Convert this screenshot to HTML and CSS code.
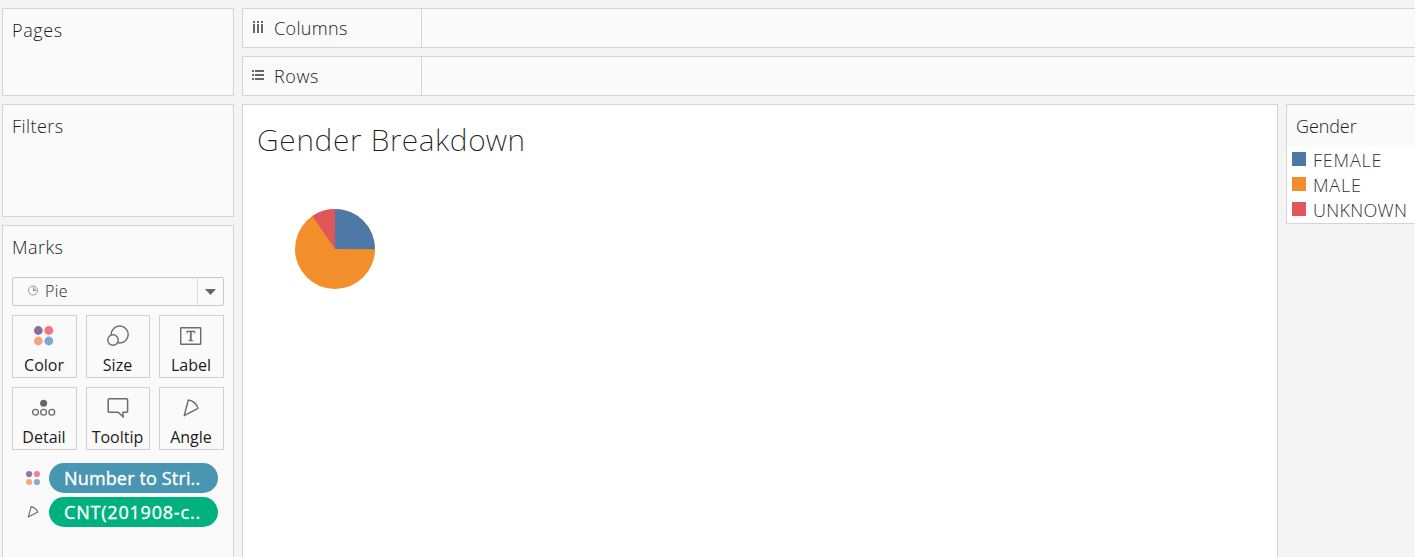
FILE: index.html
```html
<!DOCTYPE html>
<html lang="en">
<head>
<meta charset="utf-8">
<title>Gender Breakdown</title>
<link rel="stylesheet" href="styles.css">
</head>
<body>
<div class="app">
  <aside class="sidebar">
    <section class="card pages"><h2><span class="t-pages">Pages</span></h2></section>
    <section class="card filters"><h2><span class="t-filters">Filters</span></h2></section>
    <section class="card marks">
      <h2><span class="t-marks">Marks</span></h2>
      <div class="select">
        <div class="select-value">
          <svg width="12" height="12" viewBox="0 0 12 12" fill="none" stroke="#999"><circle cx="6" cy="5.5" r="4.5"/><path d="M6.5 2V5.5H9.5M6 6L8.5 3.3"/></svg>
          <span class="t-pie">Pie</span>
        </div>
        <div class="select-arrow"><svg width="11" height="6" viewBox="0 0 11 6"><path d="M0 0H11L5.5 6Z" fill="#666"/></svg></div>
      </div>
      <div class="buttons">
        <div class="btn">
          <svg width="24" height="24" viewBox="0 0 24 24"><circle cx="6.3" cy="6.5" r="4.4" fill="#86709a"/><circle cx="16.8" cy="6.5" r="4.4" fill="#f9707f"/><circle cx="6.3" cy="17" r="4.4" fill="#f5a57c"/><circle cx="16.8" cy="17" r="4.4" fill="#7fa6cd"/></svg>
          <span class="t-color">Color</span>
        </div>
        <div class="btn">
          <svg width="24" height="24" viewBox="0 0 24 24" fill="#fafafa" stroke="#6b6b6b" stroke-width="1.4"><circle cx="13.7" cy="10.5" r="8.5"/><circle cx="7" cy="16" r="5.2"/></svg>
          <span class="t-size">Size</span>
        </div>
        <div class="btn">
          <svg width="24" height="24" viewBox="0 0 24 24"><rect x="1.7" y="3.7" width="20" height="16.6" rx=".5" fill="none" stroke="#6b6b6b" stroke-width="1.4"/><text x="11.8" y="16.7" text-anchor="middle" class="glyph">T</text></svg>
          <span class="t-label">Label</span>
        </div>
        <div class="btn">
          <svg width="24" height="24" viewBox="0 0 24 24" fill="none" stroke="#6b6b6b" stroke-width="1.3"><circle cx="11.6" cy="7.2" r="3.5" fill="#666" stroke="none"/><circle cx="3.5" cy="16.3" r="2.9"/><circle cx="11.6" cy="16.3" r="2.9"/><circle cx="19.8" cy="16.3" r="2.9"/></svg>
          <span class="t-detail">Detail</span>
        </div>
        <div class="btn">
          <svg width="24" height="24" viewBox="0 0 24 24" fill="none" stroke="#6b6b6b" stroke-width="1.5"><path d="M3.2 2.8H20.6Q21.6 2.8 21.6 3.8V15.2Q21.6 16.2 20.6 16.2H17V20.8L12.2 16.2H3.2Q2.2 16.2 2.2 15.2V3.8Q2.2 2.8 3.2 2.8Z"/></svg>
          <span class="t-tooltip">Tooltip</span>
        </div>
        <div class="btn">
          <svg width="24" height="24" viewBox="0 0 24 24" fill="none" stroke="#6b6b6b" stroke-width="1.4" stroke-linejoin="round"><path d="M9.3 4L5.2 19.7L19 12.4C17.4 7.5 14.2 4.6 9.3 4Z"/></svg>
          <span class="t-angle">Angle</span>
        </div>
      </div>
      <div class="pills">
        <div class="pill-row">
          <svg width="16" height="16" viewBox="0 0 16 16"><circle cx="4.1" cy="4.1" r="3.1" fill="#907ba0"/><circle cx="11.9" cy="4.1" r="3.1" fill="#f77e8e"/><circle cx="4.1" cy="12" r="3.1" fill="#f3aa85"/><circle cx="11.9" cy="12" r="3.1" fill="#8aaace"/></svg>
          <div class="pill blue"><span class="t-num">Number to Stri..</span></div>
        </div>
        <div class="pill-row">
          <svg width="16" height="16" viewBox="0 0 16 16" fill="none" stroke="#6b6b6b" stroke-width="1.1" stroke-linejoin="round"><path d="M6.2 2.6L3.3 13L12.8 7.9C11.3 5 9.5 3 6.2 2.6Z"/></svg>
          <div class="pill green"><span class="t-cnt">CNT(201908-c..</span></div>
        </div>
      </div>
    </section>
  </aside>
  <main class="main">
    <div class="shelf">
      <div class="shelf-name"><svg width="12" height="14" viewBox="0 0 12 14" fill="#666"><path d="M1 0h2v2H1zM5 0h2v2H5zM9 0h2v2H9zM1 3h2v9H1zM5 3h2v9H5zM9 3h2v9H9z"/></svg><span class="t-columns">Columns</span></div>
    </div>
    <div class="shelf">
      <div class="shelf-name"><svg width="12" height="14" viewBox="0 0 12 14" fill="#666"><path d="M0 1h2v2H0zM3 1h9v2H3zM0 5h2v2H0zM3 5h9v2H3zM0 9h2v2H0zM3 9h9v2H3z"/></svg><span class="t-rows">Rows</span></div>
    </div>
    <div class="work">
      <section class="sheet">
        <h1><span class="t-title">Gender Breakdown</span></h1>
        <svg class="pie" width="80" height="80" viewBox="-40 -40 80 80"><circle r="40" fill="#f28e2b"/><path d="M0 0V-40A40 40 0 0 1 40 0.3Z" fill="#4e79a7"/><path d="M0 0L-22.6 -33A40 40 0 0 1 0 -40Z" fill="#e15759"/></svg>
      </section>
      <aside class="legend">
        <h2><span class="t-gender">Gender</span></h2>
        <ul>
          <li><i class="swatch female"></i><span class="t-female">FEMALE</span></li>
          <li><i class="swatch male"></i><span class="t-male">MALE</span></li>
          <li><i class="swatch unknown"></i><span class="t-unknown">UNKNOWN</span></li>
        </ul>
      </aside>
    </div>
  </main>
</div>
</body>
</html>
```
FILE: styles.css
```css
* { box-sizing: border-box; }
body { margin: 0; background: #f4f4f4; color: #1c1c1c; font-family: "Open Sans", "Noto Sans", sans-serif; font-weight: 300; overflow: hidden; }
h1, h2, ul { margin: 0; padding: 0; font-weight: 300; list-style: none; }
svg { display: block; flex: none; }
span { white-space: nowrap; }
.app { display: flex; gap: 8px; height: 557px; padding: 8px 0 0 2px; overflow: hidden; }
.sidebar { display: flex; flex-direction: column; width: 232px; flex: none; }
.card { border: 1px solid #d4d4d4; background: #fafafa; padding: 0 9px; flex: none; }
h2 { font-size: 18px; line-height: 24px; padding-top: 9px; }
.pages { height: 88px; margin-bottom: 8px; }
.filters { height: 113px; margin-bottom: 8px; }
.marks { height: 360px; }
.select { display: flex; height: 29px; margin-top: 18px; border: 1px solid #c8c8c8; border-radius: 2px; }
.select-value { flex: 1; display: flex; align-items: center; gap: 6px; padding: 0 0 1px 14px; font-size: 16px; }
.select-arrow { width: 26px; border-left: 1px solid #ddd; display: flex; align-items: center; justify-content: center; padding-right: 1px; }
.buttons { display: grid; grid-template-columns: 65px 64px 65px; grid-auto-rows: 63px; gap: 9px; margin-top: 9px; justify-content: space-between; }
.btn { border: 1px solid #d0d0d0; display: flex; flex-direction: column; align-items: center; padding: 8px 1px 0 0; font-size: 16px; line-height: 20px; color: #1c1c1c; font-weight: 400; }
.btn span { margin-top: 7px; }
.glyph { font: 400 14px "Liberation Serif", serif; fill: #555; stroke: #666; stroke-width: .3px; }
.pills { display: flex; flex-direction: column; gap: 4px; margin-top: 13px; padding-left: 13px; }
.pill-row { display: flex; align-items: center; gap: 8px; }
.pill { width: 169px; height: 30px; border-radius: 15px; padding-left: 15px; font-size: 18px; line-height: 30px; color: #fff; font-weight: 400; -webkit-text-stroke: .35px #fff; }
.blue { background: #4996b2; }
.green { background: #00b180; }
.main { flex: 1; min-width: 0; display: flex; flex-direction: column; gap: 8px; }
.shelf { height: 40px; flex: none; display: flex; border: 1px solid #d4d4d4; border-right: 0; background: #fafafa; }
.shelf-name { width: 179px; border-right: 1px solid #d4d4d4; display: flex; align-items: center; gap: 10px; padding-left: 9px; font-size: 18px; }
.work { flex: 1; display: flex; gap: 8px; align-items: flex-start; }
.sheet { width: 1036px; height: 460px; flex: none; border: 1px solid #d4d4d4; background: #fff; }
h1 { font-family: "Noto Sans", "Open Sans", sans-serif; font-size: 30px; font-weight: 200; line-height: 40px; padding: 15px 0 0 14px; }
.pie { margin: 49px 0 0 52px; }
.legend { flex: 1; height: 120px; min-width: 0; border: 1px solid #d4d4d4; border-right: 0; background: #fff; overflow: hidden; }
.legend h2 { height: 42px; padding-left: 9px; background: #fafafa; }
.legend li { display: flex; align-items: center; gap: 7px; height: 25px; padding-left: 5px; font-size: 18px; color: #333; font-weight: 300; }
.swatch { width: 14px; height: 14px; margin-bottom: 2px; }
.female { background: #4e79a7; }
.male { background: #f28e2b; }
.unknown { background: #e15759; }
.t-title { letter-spacing: .7px; }
.t-pages, .t-rows { letter-spacing: .6px; }
.t-filters, .t-marks { letter-spacing: .45px; }
.t-columns { letter-spacing: .35px; }
.t-pie { letter-spacing: .4px; }
.t-gender { letter-spacing: -.1px; }
.t-female, .t-male { letter-spacing: .8px; }
.t-unknown { letter-spacing: .3px; }
.t-num { letter-spacing: .15px; }
.t-cnt { letter-spacing: .8px; }
```
